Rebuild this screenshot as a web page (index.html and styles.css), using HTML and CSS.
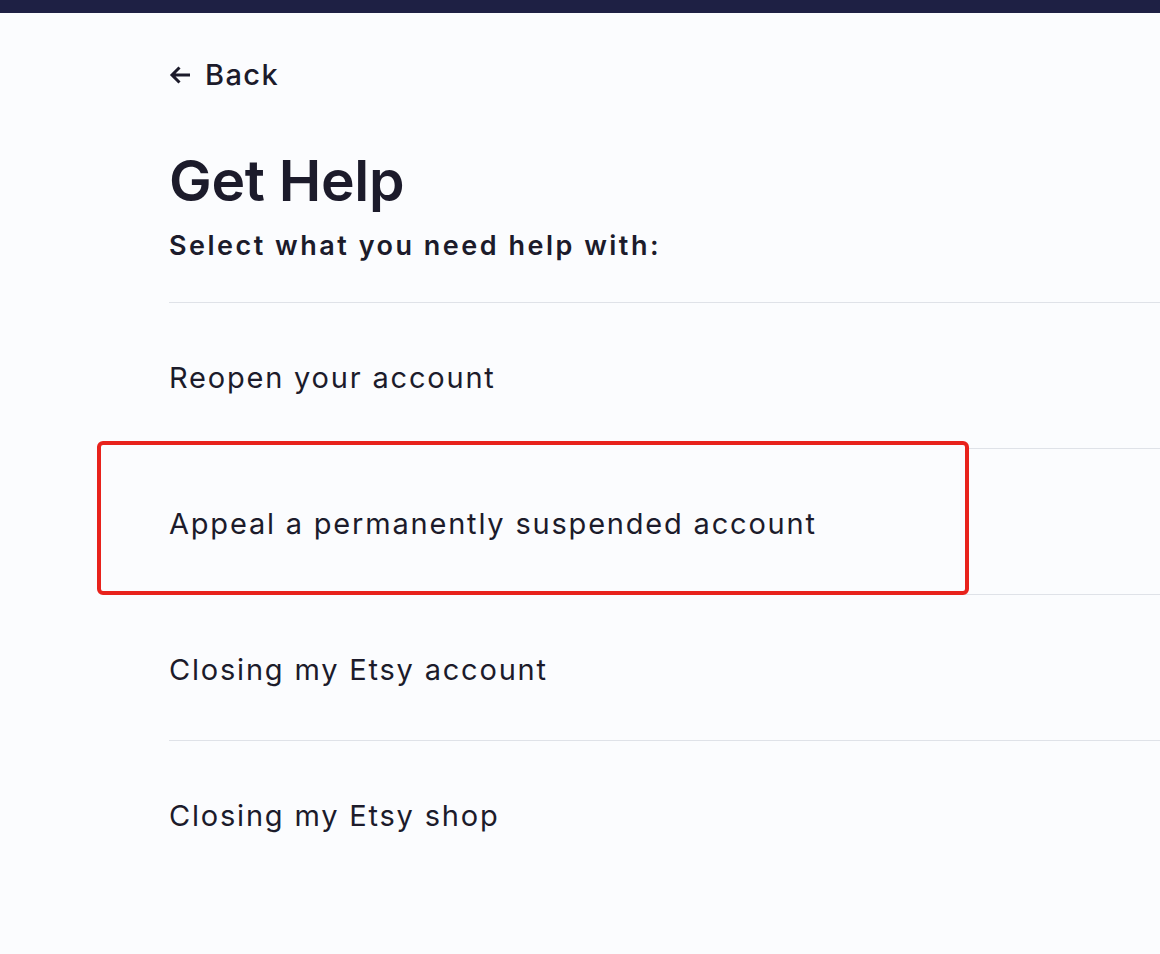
FILE: index.html
```html
<!DOCTYPE html>
<html lang="en">
<head>
<meta charset="utf-8">
<title>Get Help</title>
<link rel="stylesheet" href="styles.css">
</head>
<body>
<div class="topbar"></div>
<main class="page">
  <a class="back" href="#">
    <svg class="back-icon" viewBox="0 0 22 20" width="22" height="20" aria-hidden="true">
      <path d="M21 10H3M10.5 2.5L3 10l7.5 7.5" fill="none" stroke="currentColor" stroke-width="3" stroke-linecap="butt" stroke-linejoin="miter"/>
    </svg>
    <span>Back</span>
  </a>
  <h1 class="title">Get Help</h1>
  <p class="subtitle">Select what you need help with:</p>
  <ul class="options">
    <li class="option"><span class="option-text">Reopen your account</span></li>
    <li class="option option--marked"><span class="mark"></span><span class="option-text">Appeal a permanently suspended account</span></li>
    <li class="option"><span class="option-text">Closing my Etsy account</span></li>
    <li class="option"><span class="option-text">Closing my Etsy shop</span></li>
  </ul>
</main>
</body>
</html>
```
FILE: styles.css
```css
html, body {
  margin: 0;
  padding: 0;
}
body {
  background: #fbfcfe;
  color: #1c1b2b;
  font-family: Inter, "Noto Sans", "Liberation Sans", sans-serif;
  overflow: hidden;
}
.topbar {
  height: 13px;
  background: #1e2044;
}
.page {
  padding: 45px 0 0 169px;
  display: flex;
  flex-direction: column;
}
.back {
  display: flex;
  align-items: center;
  gap: 14px;
  color: #1c1b2b;
  text-decoration: none;
  font-size: 29px;
  font-weight: 500;
  letter-spacing: 1.4px;
  line-height: 34px;
  height: 34px;
}
.back-icon {
  width: 22px;
  height: 20px;
}
.title {
  margin: 58px 0 0 0;
  font-size: 57px;
  font-weight: 600;
  line-height: 62px;
  letter-spacing: -0.3px;
}
.subtitle {
  margin: 18px 0 0 0;
  font-size: 27px;
  font-weight: 600;
  line-height: 32px;
  letter-spacing: 2.5px;
}
.options {
  list-style: none;
  margin: 40px 0 0 0;
  padding: 0;
}
.option {
  position: relative;
  height: 145px;
  border-top: 1px solid #dfe2e8;
  display: flex;
  align-items: center;
}
.option--marked {
  z-index: 2;
}
.option-text {
  position: relative;
  z-index: 1;
  top: 2px;
  font-size: 29px;
  font-weight: 400;
  letter-spacing: 1.8px;
  line-height: 36px;
}
.mark {
  position: absolute;
  left: -72px;
  top: -8px;
  width: 872px;
  height: 154px;
  box-sizing: border-box;
  border: 4px solid #e8221c;
  border-radius: 6px;
  background: #fbfcfe;
}
```
